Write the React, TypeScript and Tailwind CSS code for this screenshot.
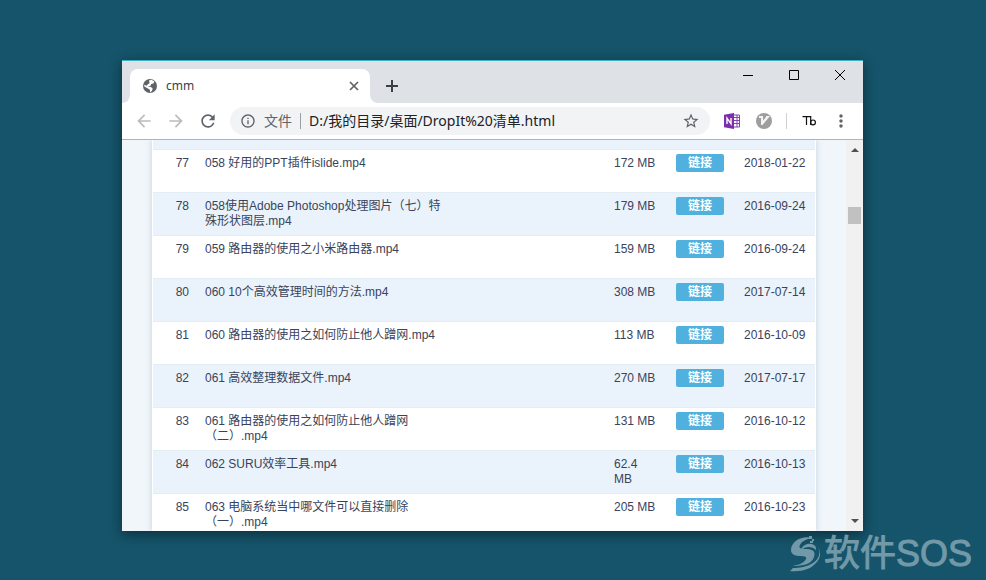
import {
  MdArrowBack,
  MdArrowForward,
  MdInfoOutline,
  MdMoreVert,
  MdRefresh,
  MdStarBorder,
} from "react-icons/md";

type FileRow = {
  no: number;
  name: string;
  size: string;
  date: string;
};

const files: FileRow[] = [
  { no: 77, name: "058 好用的PPT插件islide.mp4", size: "172 MB", date: "2018-01-22" },
  { no: 78, name: "058使用Adobe Photoshop处理图片（七）特殊形状图层.mp4", size: "179 MB", date: "2016-09-24" },
  { no: 79, name: "059 路由器的使用之小米路由器.mp4", size: "159 MB", date: "2016-09-24" },
  { no: 80, name: "060 10个高效管理时间的方法.mp4", size: "308 MB", date: "2017-07-14" },
  { no: 81, name: "060 路由器的使用之如何防止他人蹭网.mp4", size: "113 MB", date: "2016-10-09" },
  { no: 82, name: "061 高效整理数据文件.mp4", size: "270 MB", date: "2017-07-17" },
  { no: 83, name: "061 路由器的使用之如何防止他人蹭网（二）.mp4", size: "131 MB", date: "2016-10-12" },
  { no: 84, name: "062 SURU效率工具.mp4", size: "62.4 MB", date: "2016-10-13" },
  { no: 85, name: "063 电脑系统当中哪文件可以直接删除（一）.mp4", size: "205 MB", date: "2016-10-23" },
];

const toolButton = "flex h-7 w-8 shrink-0 items-center justify-center";

const TabStrip = () => {
  return (
    <div className="flex h-[42px] justify-between bg-[#dee1e6]">
      <div className="flex pt-2">
        {/* left flare of the tab */}
        <div className="flex w-2 items-end bg-white">
          <div className="h-full w-2 rounded-br-lg bg-[#dee1e6]" />
        </div>
        <div className="flex w-60 items-center rounded-t-lg bg-white pl-3 pr-2">
          <svg className="size-4" viewBox="0 0 16 16">
            <circle cx="8" cy="8" r="7" fill="#5f6368" />
            <path d="M7 2.4l2.4-.6 3 1.6-1 2.2-2.2.3-.6 1.9-2.8.6 3 .7 1.8 1.2-.5 2.5-2 1.7-.2-2.8-2-1.2L2.4 8.4l-.2-1.6 2.6 1 1-1.6 1.8-.9z" fill="#fff" />
          </svg>
          <span className="ml-2 flex-1 text-xs text-[#3c4043]">cmm</span>
          <button className="flex size-4 items-center justify-center text-[#5f6368]" aria-label="close tab">
            <svg className="size-4" viewBox="0 0 16 16">
              <path d="M4 4l8 8M12 4l-8 8" stroke="currentColor" strokeWidth="1.7" />
            </svg>
          </button>
        </div>
        <div className="flex w-2 items-end bg-white">
          <div className="h-full w-2 rounded-bl-lg bg-[#dee1e6]" />
        </div>
        <button className="flex w-7 items-center justify-center text-[#3c4043]" aria-label="new tab">
          <svg className="size-4" viewBox="0 0 16 16">
            <path d="M8 2v12M2 8h12" stroke="currentColor" strokeWidth="2" />
          </svg>
        </button>
      </div>
      {/* window controls */}
      <div className="flex h-7 text-black">
        <button className="flex w-[46px] items-center justify-center" aria-label="minimize">
          <svg className="size-3" viewBox="0 0 12 12">
            <path d="M1 6.5h10" stroke="currentColor" />
          </svg>
        </button>
        <button className="flex w-[46px] items-center justify-center" aria-label="maximize">
          <svg className="size-3" viewBox="0 0 12 12" fill="none">
            <path d="M1.5 1.5h9v9h-9z" stroke="currentColor" />
          </svg>
        </button>
        <button className="flex w-[46px] items-center justify-center" aria-label="close">
          <svg className="size-3" viewBox="0 0 12 12">
            <path d="M1 1l10 10M11 1L1 11" stroke="currentColor" />
          </svg>
        </button>
      </div>
    </div>
  );
};

const Toolbar = () => {
  return (
    <div className="flex h-[37px] items-center border-b border-[#b0b3b8] bg-white px-1.5 text-[#5f6368]">
      <button className={`${toolButton} text-[#babcbe]`} aria-label="back">
        <MdArrowBack className="size-5" />
      </button>
      <button className={`${toolButton} text-[#babcbe]`} aria-label="forward">
        <MdArrowForward className="size-5" />
      </button>
      <button className={toolButton} aria-label="reload">
        <MdRefresh className="size-5" />
      </button>
      <div className="mx-1.5 flex h-7 min-w-0 flex-1 items-center rounded-full bg-[#f1f3f4] px-2.5">
        <MdInfoOutline className="size-4 shrink-0" />
        <label htmlFor="url" className="ml-2 shrink-0 text-sm">
          文件
        </label>
        <span className="mx-2 h-4 w-px shrink-0 bg-[#9aa0a6]" />
        <input
          id="url"
          type="text"
          className="min-w-0 flex-1 bg-transparent text-sm text-[#202124] outline-none"
          defaultValue="D:/我的目录/桌面/DropIt%20清单.html"
        />
        <button className="shrink-0" aria-label="bookmark">
          <MdStarBorder className="size-[18px]" />
        </button>
      </div>
      <button className={toolButton} aria-label="OneNote">
        <svg className="size-4" viewBox="0 0 16 16">
          <path d="M9 2h6.5v12H9z" fill="#fff" stroke="#8a3fb5" />
          <path d="M9 4.5h7M9 7.5h7M9 10.5h7M13 2v12" stroke="#8a3fb5" />
          <path d="M0 1.7L10 0v16L0 14.3z" fill="#7b2fa8" />
          <path d="M3 11V5.2L7 10.8V5" fill="none" stroke="#fff" strokeWidth="1.4" />
        </svg>
      </button>
      <button className={toolButton} aria-label="extension">
        <svg className="size-4" viewBox="0 0 16 16">
          <circle cx="8" cy="8" r="8" fill="#9e9e9e" />
          <path d="M3 3h4v4.5L10 4V3h4L6.5 12H5V5H3z" fill="#f4f4f4" />
        </svg>
      </button>
      <span className="mx-1.5 h-4 w-px bg-[#cfd1d4]" />
      <button className={toolButton} aria-label="text mode">
        <svg className="h-3 w-4" viewBox="0 0 16 12" fill="none" stroke="#111" strokeWidth="1.2">
          <path d="M1.5 1.6h8M5.5 1.6V10M9.7 1v9" />
          <circle cx="12" cy="7.4" r="2.4" />
        </svg>
      </button>
      <button className={toolButton} aria-label="menu">
        <MdMoreVert className="size-5" />
      </button>
    </div>
  );
};

const FileTable = () => {
  return (
    <table className="w-full table-fixed border-collapse text-left text-xs/[15px] text-[#39435a]">
      <colgroup>
        <col className="w-[44px]" />
        <col />
        <col className="w-[58px]" />
        <col className="w-[72px]" />
        <col className="w-[79px]" />
      </colgroup>
      <tbody>
        {/* tail of the row scrolled off at the top */}
        <tr className="h-[9px] bg-[#eaf3fb]">
          <td colSpan={5} />
        </tr>
        {files.map((file) => (
          <tr key={file.no} className="h-[43px] border-t border-[#e2edf4] align-top even:bg-white odd:bg-[#eaf3fb]">
            <td className="px-2 pt-1.5 text-right">{file.no}</td>
            <td className="px-2 pt-1.5">
              <div className="max-w-[244px]">{file.name}</div>
            </td>
            <td className="px-2 pt-1.5">{file.size}</td>
            <td className="px-3 pt-1">
              <a href="#" className="block h-[18px] rounded-xs bg-[#50b1df] text-center text-xs/[18px] font-bold text-white">
                链接
              </a>
            </td>
            <td className="whitespace-nowrap px-2 pt-1.5">{file.date}</td>
          </tr>
        ))}
      </tbody>
    </table>
  );
};

const Scrollbar = () => {
  return (
    <div className="flex w-[17px] shrink-0 flex-col items-center justify-between bg-[#f1f1f1] py-1.5 text-[#505050]">
      <div className="flex flex-col items-center">
        <svg className="h-2 w-2" viewBox="0 0 8 8">
          <path d="M0 6l4-4 4 4z" fill="currentColor" />
        </svg>
        <div className="mt-[53px] h-[17px] w-[13px] bg-[#c1c1c1]" />
      </div>
      <svg className="h-2 w-2" viewBox="0 0 8 8">
        <path d="M0 2l4 4 4-4z" fill="currentColor" />
      </svg>
    </div>
  );
};

const Watermark = () => {
  return (
    <div className="absolute bottom-2 right-3.5 flex items-center gap-1 text-[#7299a8]">
      <svg className="h-9 w-[30px]" viewBox="0 0 30 36" fill="currentColor">
        <path d="M22 2C13-1 1 5 1 14c0 5 5 6 10 6 4 0 6 1 5 3-2 4-8 6-13 7 10 0 19-2 21-9 2-6-2-8-8-8-5 0-8-1-6-4 2-4 7-6 12-7z" />
        <path d="M28 11c3 6 1 12-5 16-6 4-14 5-20 5l-3 3c12 1 21-2 26-8 5-5 5-11 2-16z" />
        <path d="M11 14c1-5 8-8 13-5 2 1 2 3 2 5-4-4-10-4-15 0z" />
        <path d="M19 0h3v3h-3zM22 3h2v2h-2zM20 5h3v2h-3z" />
      </svg>
      <span className="font-['Liberation_Sans','Noto_Sans_CJK_SC',sans-serif] text-4xl/9 [-webkit-text-stroke:1px_#7299a8]">
        软件SOS
      </span>
    </div>
  );
};

const App = () => {
  return (
    <div className="relative flex h-screen flex-col bg-[#15546a] pb-[49px] pl-[122px] pr-[123px] pt-[60px] font-['Noto_Sans','Noto_Sans_CJK_SC',sans-serif]">
      <div className="flex min-h-0 flex-1 flex-col border-t border-[#3fb0c4] bg-white shadow-[0_3px_12px_rgba(0,0,0,0.45)]">
        <TabStrip />
        <Toolbar />
        <div className="flex min-h-0 flex-1 overflow-hidden bg-[#f1f6fa] font-['Liberation_Sans','Noto_Sans_CJK_SC',sans-serif]">
          <div className="mx-[30px] min-w-0 flex-1 bg-white px-px shadow-[0_0_6px_rgba(60,90,130,0.25)]">
            <FileTable />
          </div>
          <Scrollbar />
        </div>
      </div>
      <Watermark />
    </div>
  );
};

export default App;
